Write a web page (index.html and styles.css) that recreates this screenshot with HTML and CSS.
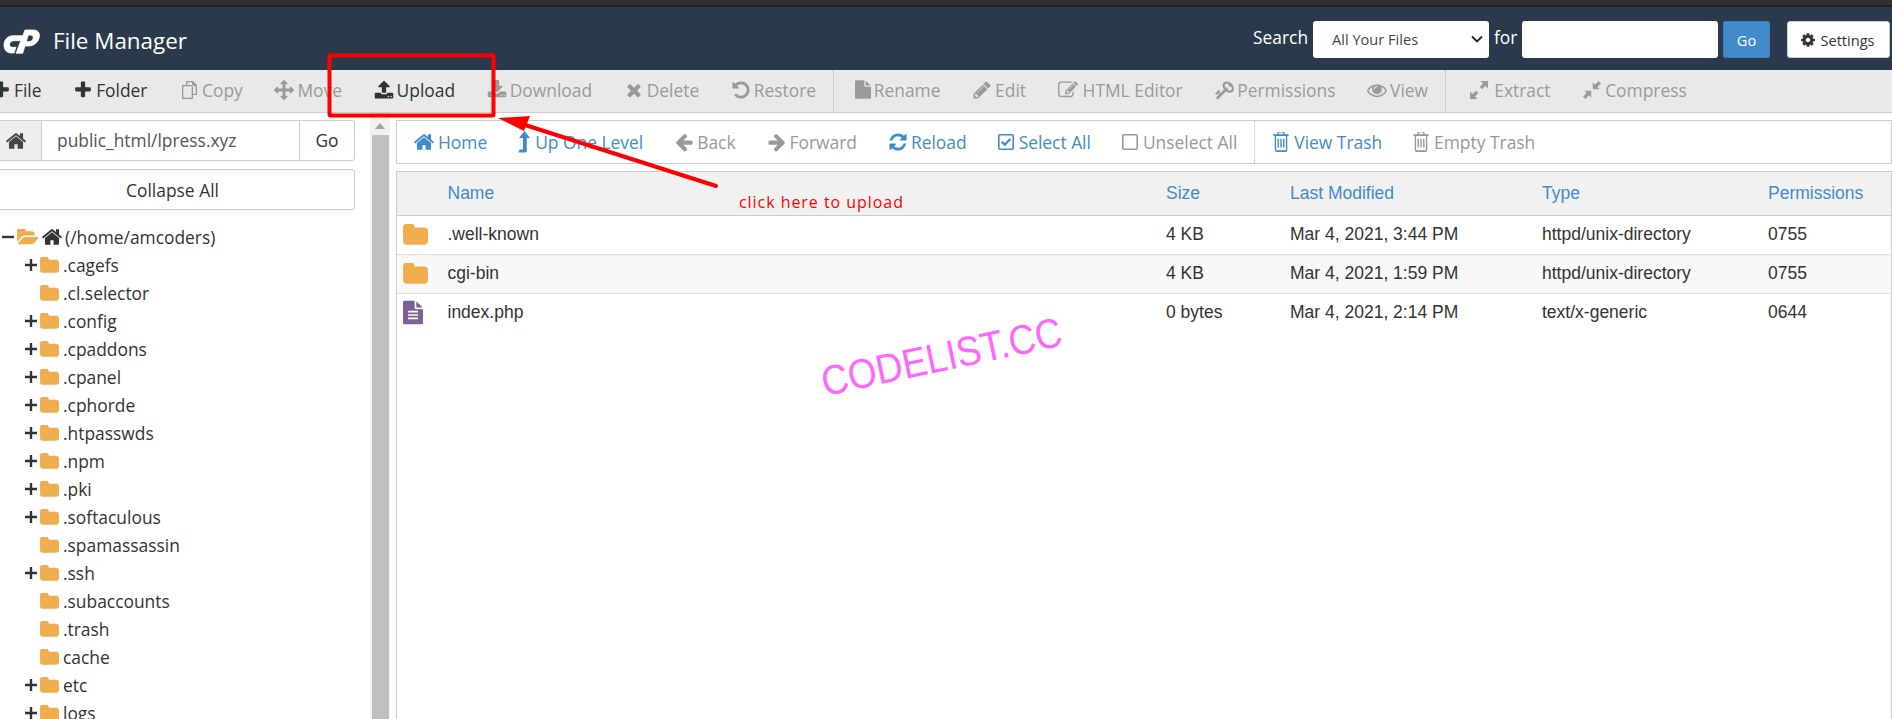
FILE: index.html
```html
<!DOCTYPE html>
<html lang="en">
<head>
<meta charset="utf-8">
<title>File Manager</title>
<link rel="stylesheet" href="styles.css">
</head>
<body>
<svg class="sprite" xmlns="http://www.w3.org/2000/svg">
<symbol id="i-home" viewBox="0 0 1792 1792"><path d="M1472 992v480q0 26-19 45t-45 19h-384v-384h-256v384h-384q-26 0-45-19t-19-45v-480q0-1 .5-3t.5-3l575-474 575 474q1 2 1 6zm223-69l-62 74q-8 9-21 11h-3q-13 0-21-7l-692-577-692 577q-12 8-24 7-13-2-21-11l-62-74q-8-10-7-23.500t11-21.500l719-599q32-26 76-26t76 26l244 204v-195q0-14 9-23t23-9h192q14 0 23 9t9 23v408l219 182q10 8 11 21.500t-7 23.500z"/></symbol>
<symbol id="i-plus" viewBox="0 0 1792 1792"><path d="M1600 736v192q0 40-28 68t-68 28h-416v416q0 40-28 68t-68 28h-192q-40 0-68-28t-28-68v-416h-416q-40 0-68-28t-28-68v-192q0-40 28-68t68-28h416v-416q0-40 28-68t68-28h192q40 0 68 28t28 68v416h416q40 0 68 28t28 68z"/></symbol>
<symbol id="i-tplus" viewBox="0 0 12 12"><path d="M4.800 0h2.400v4.800H12v2.400H7.200V12H4.800V7.200H0V4.800h4.800z"/></symbol>
<symbol id="i-tminus" viewBox="0 0 12 12"><path d="M0 4.800h12v2.400H0z"/></symbol>
<symbol id="i-folder" viewBox="0 0 1664 1408"><path d="M1664 456v704q0 92-66 158t-158 66H224q-92 0-158-66T0 1160V200q0-92 66-158t158-66h320q92 0 158 66t66 158v32h672q92 0 158 66t66 158z"/></symbol>
<symbol id="i-folder-open" viewBox="0 0 1920 1408"><path d="M1879 760q0 31-31 66l-336 396q-43 51-120.500 86.500t-143.500 35.500h-1088q-34 0-60.500-13t-26.500-43q0-31 31-66l336-396q43-51 120.500-86.500t143.500-35.500h1088q34 0 60.500 13t26.500 43zm-343-344v160h-832q-94 0-197 47.500t-164 119.500l-337 396-5 6q0-4-.5-12.500t-.500-12.500v-960q0-92 66-158t158-66h320q92 0 158 66t66 158v32h544q92 0 158 66t66 158z"/></symbol>
<symbol id="i-upload" viewBox="0 0 1792 1792"><path d="M1344 1472q0-26-19-45t-45-19-45 19-19 45 19 45 45 19 45-19 19-45zm256 0q0-26-19-45t-45-19-45 19-19 45 19 45 45 19 45-19 19-45zm128-224v320q0 40-28 68t-68 28h-1472q-40 0-68-28t-28-68v-320q0-40 28-68t68-28h427q21 56 70.500 92t110.500 36h256q61 0 110.500-36t70.500-92h427q40 0 68 28t28 68zm-325-648q-17 40-59 40h-256v448q0 26-19 45t-45 19h-256q-26 0-45-19t-19-45v-448h-256q-42 0-59-40-17-39 14-69l448-448q18-19 45-19t45 19l448 448q31 30 14 69z"/></symbol>
<symbol id="i-download" viewBox="0 0 1792 1792"><path d="M1344 1344q0-26-19-45t-45-19-45 19-19 45 19 45 45 19 45-19 19-45zm256 0q0-26-19-45t-45-19-45 19-19 45 19 45 45 19 45-19 19-45zm128-224v320q0 40-28 68t-68 28h-1472q-40 0-68-28t-28-68v-320q0-40 28-68t68-28h465l135 136q58 56 136 56t136-56l136-136h464q40 0 68 28t28 68zm-325-569q17 41-14 70l-448 448q-18 19-45 19t-45-19l-448-448q-31-29-14-70 17-39 59-39h256v-448q0-26 19-45t45-19h256q26 0 45 19t19 45v448h256q42 0 59 39z"/></symbol>
<symbol id="i-times" viewBox="0 0 1792 1792"><path d="M1490 1322q0 40-28 68l-136 136q-28 28-68 28t-68-28l-294-294-294 294q-28 28-68 28t-68-28l-136-136q-28-28-28-68t28-68l294-294-294-294q-28-28-28-68t28-68l136-136q28-28 68-28t68 28l294 294 294-294q28-28 68-28t68 28l136 136q28 28 28 68t-28 68l-294 294 294 294q28 28 28 68z"/></symbol>
<symbol id="i-left" viewBox="0 0 1792 1792"><path d="M1664 896v128q0 53-32.500 90.500t-84.500 37.500h-704l293 294q38 36 38 90t-38 90l-75 76q-37 37-90 37-52 0-91-37l-651-652q-37-37-37-90 0-52 37-91l651-650q38-38 91-38 52 0 90 38l75 74q38 38 38 91t-38 91l-293 293h704q52 0 84.500 37.500t32.500 90.500z"/></symbol>
<symbol id="i-right" viewBox="0 0 1792 1792"><path d="M1600 960q0 54-37 91l-651 651q-39 37-91 37-51 0-90-37l-75-75q-38-38-38-91t38-91l293-293h-704q-52 0-84.500-37.500t-32.500-90.500v-128q0-53 32.500-90.500t84.500-37.500h704l-293-294q-38-36-38-90t38-90l75-75q38-38 90-38 53 0 91 38l651 651q37 35 37 90z"/></symbol>
<symbol id="i-refresh" viewBox="0 0 1792 1792"><path d="M1639 1056q0 5-1 7-64 268-268 434.500t-478 166.500q-146 0-282.500-55t-243.500-157l-129 129q-19 19-45 19t-45-19-19-45v-448q0-26 19-45t45-19h448q26 0 45 19t19 45-19 45l-137 137q71 66 161 102t187 36q134 0 250-65t186-179q11-17 53-117 8-23 30-23h192q13 0 22.500 9.500t9.500 22.500zm25-800v448q0 26-19 45t-45 19h-448q-26 0-45-19t-19-45 19-45l138-138q-148-137-349-137-134 0-250 65t-186 179q-11 17-53 117-8 23-30 23h-199q-13 0-22.500-9.500t-9.500-22.500v-7q65-268 270-434.500t480-166.500q146 0 284 55.500t245 156.500l130-129q19-19 45-19t45 19 19 45z"/></symbol>
<symbol id="i-trash" viewBox="160 224 1472 1440" preserveAspectRatio="none"><path d="M704 736v576q0 14-9 23t-23 9h-64q-14 0-23-9t-9-23v-576q0-14 9-23t23-9h64q14 0 23 9t9 23zm256 0v576q0 14-9 23t-23 9h-64q-14 0-23-9t-9-23v-576q0-14 9-23t23-9h64q14 0 23 9t9 23zm256 0v576q0 14-9 23t-23 9h-64q-14 0-23-9t-9-23v-576q0-14 9-23t23-9h64q14 0 23 9t9 23zm128 724v-948h-896v948q0 22 7 40.500t14.500 27 10.500 8.500h832q3 0 10.500-8.500t14.500-27 7-40.500zm-672-1076h448l-48-117q-7-9-17-11h-317q-10 2-17 11zm928 32v64q0 14-9 23t-23 9h-96v948q0 83-47 143.500t-113 60.500h-832q-66 0-113-58.500t-47-141.500v-952h-96q-14 0-23-9t-9-23v-64q0-14 9-23t23-9h309l70-167q15-37 54-63t79-26h320q40 0 79 26t54 63l70 167h309q14 0 23 9t9 23z"/></symbol>
<symbol id="i-cog" viewBox="0 0 1792 1792"><path d="M1152 896q0-106-75-181t-181-75-181 75-75 181 75 181 181 75 181-75 75-181zm512-109v222q0 12-8 23t-20 13l-185 28q-19 54-39 91 35 50 107 138 10 12 10 25t-9 23q-27 37-99 108t-94 71q-12 0-26-9l-138-108q-44 23-91 38-16 136-29 186-7 28-36 28h-222q-14 0-24.500-8.500t-11.500-21.500l-28-184q-49-16-90-37l-141 107q-10 9-25 9-14 0-25-11-126-114-165-168-7-10-7-23 0-12 8-23 15-21 51-66.500t54-70.500q-27-50-41-99l-183-27q-13-2-21-12.500t-8-23.500v-222q0-12 8-23t19-13l186-28q14-46 39-92-40-57-107-138-10-12-10-24 0-10 9-23 26-36 98.500-107.500t94.500-71.500q13 0 26 10l138 107q44-23 91-38 16-136 29-186 7-28 36-28h222q14 0 24.500 8.500t11.500 21.500l28 184q49 16 90 37l142-107q9-9 24-9 13 0 25 10 129 119 165 170 7 8 7 22 0 12-8 23-15 21-51 66.500t-54 70.500q26 50 41 98l183 28q13 2 21 12.500t8 23.500z"/></symbol>
<symbol id="i-file" viewBox="128 0 1536 1792"><path d="M1152 512v-472q22 14 36 28l408 408q14 14 28 36h-472zm-128 32q0 40 28 68t68 28h544v1056q0 40-28 68t-68 28h-1344q-40 0-68-28t-28-68v-1600q0-40 28-68t68-28h800v544z"/></symbol>
<symbol id="i-filetext" viewBox="0 0 1536 1792"><path d="M1468 476q14 14 28 36h-472v-472q22 14 36 28zm-476 164h544v1056q0 40-28 68t-68 28h-1344q-40 0-68-28t-28-68v-1600q0-40 28-68t68-28h800v544q0 40 28 68t68 28zm160 736v-64q0-14-9-23t-23-9h-704q-14 0-23 9t-9 23v64q0 14 9 23t23 9h704q14 0 23-9t9-23zm0-256v-64q0-14-9-23t-23-9h-704q-14 0-23 9t-9 23v64q0 14 9 23t23 9h704q14 0 23-9t9-23zm0-256v-64q0-14-9-23t-23-9h-704q-14 0-23 9t-9 23v64q0 14 9 23t23 9h704q14 0 23-9t9-23z"/></symbol>
<symbol id="i-move" viewBox="0 0 1792 1792"><path d="M1792 896q0 26-19 45l-256 256q-19 19-45 19t-45-19-19-45v-128h-384v384h128q26 0 45 19t19 45-19 45l-256 256q-19 19-45 19t-45-19l-256-256q-19-19-19-45t19-45 45-19h128v-384h-384v128q0 26-19 45t-45 19-45-19l-256-256q-19-19-19-45t19-45l256-256q19-19 45-19t45 19 19 45v128h384v-384h-128q-26 0-45-19t-19-45 19-45l256-256q19-19 45-19t45 19l256 256q19 19 19 45t-19 45-45 19h-128v384h384v-128q0-26 19-45t45-19 45 19l256 256q19 19 19 45z"/></symbol>
<symbol id="i-undo" viewBox="0 0 1792 1792"><path d="M1664 896q0 156-61 298t-164 245-245 164-298 61q-172 0-327-72.500t-264-204.500q-7-10-6.500-22.500t8.500-20.500l137-138q10-9 25-9 16 2 23 12 73 95 179 147t225 52q104 0 198.500-40.500t163.500-109.500 109.500-163.500 40.500-198.500-40.500-198.500-109.500-163.500-163.500-109.500-198.500-40.500q-98 0-188 35.500t-160 101.500l137 138q31 30 14 69-17 40-59 40h-448q-26 0-45-19t-19-45v-448q0-42 40-59 39-17 69 14l130 129q107-101 244.500-156.500t284.500-55.500q156 0 298 61t245 164 164 245 61 298z"/></symbol>
<symbol id="i-pencil" viewBox="0 0 1792 1792"><path d="M491 1536l91-91-235-235-91 91v107h128v128h107zm523-928q0-22-22-22-10 0-17 7l-542 542q-7 7-7 17 0 22 22 22 10 0 17-7l542-542q7-7 7-17zm-54-192l416 416-832 832h-416v-416zm683 96q0 53-37 90l-166 166-416-416 166-165q36-38 90-38 53 0 91 38l235 234q37 39 37 91z"/></symbol>
<symbol id="i-edit" viewBox="0 0 1792 1792"><path d="M888 1184l116-116-152-152-116 116v56h96v96h56zm440-720q-16-16-33 1l-350 350q-17 17-1 33t33-1l350-350q17-17 1-33zm80 594v190q0 119-84.500 203.500t-203.500 84.500h-832q-119 0-203.500-84.500t-84.500-203.500v-832q0-119 84.500-203.500t203.500-84.500h832q63 0 117 25 15 7 18 23 3 17-9 29l-49 49q-14 14-32 8-23-6-45-6h-832q-66 0-113 47t-47 113v832q0 66 47 113t113 47h832q66 0 113-47t47-113v-126q0-13 9-22l64-64q15-15 35-7t20 29zm-96-738l288 288-672 672h-288v-288zm444 132l-92 92-288-288 92-92q28-28 68-28t68 28l152 152q28 28 28 68t-28 68z"/></symbol>
<symbol id="i-key" viewBox="0 0 1792 1792"><g transform="matrix(-1 0 0 1 1792 0)"><path d="M832 512q0-80-56-136t-136-56-136 56-56 136q0 42 19 83-41-19-83-19-80 0-136 56t-56 136 56 136 136 56 136-56 56-136q0-42-19-83 41 19 83 19 80 0 136-56t56-136zm851 704q0 17-49 66t-66 49q-9 0-28.500-16t-36.500-33-38.500-40-24.500-26l-96 96 220 220q28 28 28 68 0 42-39 81t-81 39q-40 0-68-28l-671-671q-176 131-365 131-163 0-265.500-102.500t-102.500-265.500q0-160 95-313t248-248 313-95q163 0 265.500 102.500t102.500 265.500q0 189-131 365l355 355 96-96q-3-3-26-24.500t-40-38.500-33-36.500-16-28.500q0-17 49-66t66-49q13 0 23 10 6 6 46 44.500t82 79.500 86.500 86 73 78 28.500 41z"/></g></symbol>
<symbol id="i-eye" viewBox="0 0 1792 1792"><path d="M1664 960q-152-236-381-353 61 104 61 225 0 185-131.500 316.500t-316.500 131.500-316.500-131.500-131.500-316.500q0-121 61-225-229 117-381 353 133 205 333.500 326.500t434.500 121.500 434.500-121.500 333.500-326.500zm-720-384q0-20-14-34t-34-14q-125 0-214.500 89.500t-89.500 214.500q0 20 14 34t34 14 34-14 14-34q0-86 61-147t147-61q20 0 34-14t14-34zm848 384q0 34-20 69-140 230-376.500 368.500t-499.500 138.500-499.500-139-376.500-368q-20-35-20-69t20-69q140-229 376.500-368t499.500-139 499.500 139 376.500 368q20 35 20 69z"/></symbol>
<symbol id="i-copy" viewBox="0 0 20 20"><path d="M7 1h7l4 4v10h-4v4H3V5h4zm1.300 1.300V5h5.700v8.700h2.700V6.300H13V2.300zM4.300 6.300v11.400h8.400V6.300z" fill-rule="evenodd"/></symbol>
<symbol id="i-expand" viewBox="0 0 20 20"><path d="M11.500 1H19v7.500l-2.600-2.600-3.400 3.400-2.300-2.300 3.400-3.400zM8.500 19H1v-7.500l2.600 2.600 3.400-3.400 2.300 2.300-3.400 3.400z"/></symbol>
<symbol id="i-compress" viewBox="0 0 20 20"><path d="M10.800 9.200V2.500l2.200 2.200L16.500 1 19 3.500l-3.700 3.500 2.200 2.200zM9.200 10.800v6.700L7 15.300 3.500 19 1 16.500l3.700-3.500-2.200-2.200z"/></symbol>
<symbol id="i-check" viewBox="2 2 16 16"><path d="M4 2h12a2 2 0 0 1 2 2v12a2 2 0 0 1-2 2H4a2 2 0 0 1-2-2V4a2 2 0 0 1 2-2zm0 1.600a.5.5 0 0 0-.4.400v12a.5.5 0 0 0 .4.400h12a.5.5 0 0 0 .4-.4V4a.5.500 0 0 0-.4-.4zM8.800 14.200 5 10.400l1.600-1.600 2.200 2.200 4.800-4.800 1.600 1.600z" fill-rule="evenodd"/></symbol>
<symbol id="i-square" viewBox="2 2 16 16"><path d="M4 2h12a2 2 0 0 1 2 2v12a2 2 0 0 1-2 2H4a2 2 0 0 1-2-2V4a2 2 0 0 1 2-2zm0 1.600a.5.5 0 0 0-.4.400v12a.5.5 0 0 0 .4.400h12a.5.5 0 0 0 .4-.4V4a.5.500 0 0 0-.4-.4z" fill-rule="evenodd"/></symbol>
<symbol id="i-levelup" viewBox="0 0 12 22"><path d="M6.500 0 12 7H8.800v13a1.500 1.500 0 0 1-1.500 1.500H.5l1-3H5V7H1z"/></symbol>
</svg>

<div class="strip"></div>

<header class="top">
  <svg class="logo" viewBox="0 0 37 25"><path d="M20.300 6.700H10.300C5 6.700 1 10.500 1 16 1 20 3 23.700 8 24H11L13 18.300H9C7 18 6 16.500 6.500 15 7 12.800 9 11.700 11 11.700H18.500Z"/><path d="M22 1H30.300C35 1 37 4 36.300 8 35.500 13 31 17 26 17H20L21.500 12.700H26C29 12.700 31 9 30 7.500 29.500 6.500 28.500 6 27 6H25.300L19.700 24.300H13Z"/></svg>
  <h1 class="title">File Manager</h1>
  <form class="search">
    <label class="search-label">Search</label>
    <div class="select"><span>All Your Files</span><svg class="chev" viewBox="0 0 12 8"><path d="M1 1.500 6 6.500 11 1.500" fill="none" stroke="#222" stroke-width="1.800"/></svg></div>
    <label class="search-label for">for</label>
    <div class="search-input"></div>
    <button class="go" type="button">Go</button>
    <button class="settings" type="button"><svg class="gear"><use href="#i-cog"/></svg>Settings</button>
  </form>
</header>

<nav class="toolbar">
  <a class="tool"><svg class="ic"><use href="#i-plus"/></svg>File</a>
  <a class="tool"><svg class="ic"><use href="#i-plus"/></svg>Folder</a>
  <a class="tool off"><svg class="ic"><use href="#i-copy"/></svg>Copy</a>
  <a class="tool off"><svg class="ic"><use href="#i-move"/></svg>Move</a>
  <a class="tool"><svg class="ic"><use href="#i-upload"/></svg>Upload</a>
  <a class="tool off"><svg class="ic"><use href="#i-download"/></svg>Download</a>
  <a class="tool off"><svg class="ic"><use href="#i-times"/></svg>Delete</a>
  <a class="tool off"><svg class="ic"><use href="#i-undo"/></svg>Restore</a>
  <span class="sep"></span>
  <a class="tool off"><svg class="ic ic-file"><use href="#i-file"/></svg>Rename</a>
  <a class="tool off"><svg class="ic"><use href="#i-pencil"/></svg>Edit</a>
  <a class="tool off"><svg class="ic ic-edit"><use href="#i-edit"/></svg>HTML Editor</a>
  <a class="tool off"><svg class="ic"><use href="#i-key"/></svg>Permissions</a>
  <a class="tool off"><svg class="ic"><use href="#i-eye"/></svg>View</a>
  <span class="sep sep-b"></span>
  <a class="tool off"><svg class="ic ic-wide"><use href="#i-expand"/></svg>Extract</a>
  <a class="tool off"><svg class="ic"><use href="#i-compress"/></svg>Compress</a>
</nav>

<div class="content">
  <aside class="side">
    <div class="path">
      <span class="path-home"><svg class="path-ic"><use href="#i-home"/></svg></span>
      <span class="path-val">public_html/lpress.xyz</span>
      <span class="path-go">Go</span>
    </div>
    <button class="collapse" type="button">Collapse All</button>
    <ul class="tree">
      <li class="node root"><svg class="tog"><use href="#i-tminus"/></svg><svg class="open"><use href="#i-folder-open"/></svg><svg class="roothome"><use href="#i-home"/></svg><span>(/home/amcoders)</span></li>
      <li class="node"><svg class="tog"><use href="#i-tplus"/></svg><svg class="fold"><use href="#i-folder"/></svg><span>.cagefs</span></li>
      <li class="node"><i class="tog"></i><svg class="fold"><use href="#i-folder"/></svg><span>.cl.selector</span></li>
      <li class="node"><svg class="tog"><use href="#i-tplus"/></svg><svg class="fold"><use href="#i-folder"/></svg><span>.config</span></li>
      <li class="node"><svg class="tog"><use href="#i-tplus"/></svg><svg class="fold"><use href="#i-folder"/></svg><span>.cpaddons</span></li>
      <li class="node"><svg class="tog"><use href="#i-tplus"/></svg><svg class="fold"><use href="#i-folder"/></svg><span>.cpanel</span></li>
      <li class="node"><svg class="tog"><use href="#i-tplus"/></svg><svg class="fold"><use href="#i-folder"/></svg><span>.cphorde</span></li>
      <li class="node"><svg class="tog"><use href="#i-tplus"/></svg><svg class="fold"><use href="#i-folder"/></svg><span>.htpasswds</span></li>
      <li class="node"><svg class="tog"><use href="#i-tplus"/></svg><svg class="fold"><use href="#i-folder"/></svg><span>.npm</span></li>
      <li class="node"><svg class="tog"><use href="#i-tplus"/></svg><svg class="fold"><use href="#i-folder"/></svg><span>.pki</span></li>
      <li class="node"><svg class="tog"><use href="#i-tplus"/></svg><svg class="fold"><use href="#i-folder"/></svg><span>.softaculous</span></li>
      <li class="node"><i class="tog"></i><svg class="fold"><use href="#i-folder"/></svg><span>.spamassassin</span></li>
      <li class="node"><svg class="tog"><use href="#i-tplus"/></svg><svg class="fold"><use href="#i-folder"/></svg><span>.ssh</span></li>
      <li class="node"><i class="tog"></i><svg class="fold"><use href="#i-folder"/></svg><span>.subaccounts</span></li>
      <li class="node"><i class="tog"></i><svg class="fold"><use href="#i-folder"/></svg><span>.trash</span></li>
      <li class="node"><i class="tog"></i><svg class="fold"><use href="#i-folder"/></svg><span>cache</span></li>
      <li class="node"><svg class="tog"><use href="#i-tplus"/></svg><svg class="fold"><use href="#i-folder"/></svg><span>etc</span></li>
      <li class="node"><svg class="tog"><use href="#i-tplus"/></svg><svg class="fold"><use href="#i-folder"/></svg><span>logs</span></li>
    </ul>
  </aside>

  <div class="scroll"><div class="scroll-up"></div><div class="scroll-thumb"></div></div>

  <main class="main">
    <nav class="actions">
      <a class="act"><svg class="ic ic-home"><use href="#i-home"/></svg>Home</a>
      <a class="act"><svg class="ic lvl"><use href="#i-levelup"/></svg>Up One Level</a>
      <a class="act off"><svg class="ic"><use href="#i-left"/></svg>Back</a>
      <a class="act off"><svg class="ic"><use href="#i-right"/></svg>Forward</a>
      <a class="act"><svg class="ic"><use href="#i-refresh"/></svg>Reload</a>
      <a class="act"><svg class="ic ic-box"><use href="#i-check"/></svg>Select All</a>
      <a class="act off"><svg class="ic ic-box"><use href="#i-square"/></svg>Unselect All</a>
      <span class="sep tall"></span>
      <a class="act"><svg class="ic ic-trash"><use href="#i-trash"/></svg>View Trash</a>
      <a class="act off"><svg class="ic ic-trash"><use href="#i-trash"/></svg>Empty Trash</a>
    </nav>

    <section class="listing">
      <table class="files">
        <colgroup><col class="c-ic"><col class="c-name"><col class="c-size"><col class="c-date"><col class="c-type"><col class="c-perm"></colgroup>
        <thead><tr><th></th><th>Name</th><th>Size</th><th>Last Modified</th><th>Type</th><th>Permissions</th></tr></thead>
        <tbody>
          <tr><td class="cell-ic"><svg class="row-fold"><use href="#i-folder"/></svg></td><td>.well-known</td><td>4 KB</td><td>Mar 4, 2021, 3:44 PM</td><td>httpd/unix-directory</td><td>0755</td></tr>
          <tr class="alt"><td class="cell-ic"><svg class="row-fold"><use href="#i-folder"/></svg></td><td>cgi-bin</td><td>4 KB</td><td>Mar 4, 2021, 1:59 PM</td><td>httpd/unix-directory</td><td>0755</td></tr>
          <tr><td class="cell-ic"><svg class="row-file"><use href="#i-filetext"/></svg></td><td>index.php</td><td>0 bytes</td><td>Mar 4, 2021, 2:14 PM</td><td>text/x-generic</td><td>0644</td></tr>
        </tbody>
      </table>
    </section>
  </main>
</div>

<svg class="markup" viewBox="0 0 1892 719">
  <rect x="329.500" y="55.500" width="164" height="60" fill="none" stroke="#f00" stroke-width="4" rx="1"/>
  <path d="M716 186 522 124" fill="none" stroke="#f00" stroke-width="4" stroke-linecap="round"/>
  <path d="M498 118 530 116 524 131z" fill="#f00"/>
</svg>
<div class="note">click here to upload</div>
<div class="stamp">CODELIST.CC</div>
</body>
</html>
```
FILE: styles.css
```css
* { box-sizing: border-box; }
html, body { margin: 0; padding: 0; }
body {
  width: 1892px;
  height: 719px;
  overflow: hidden;
  position: relative;
  display: flex;
  flex-direction: column;
  background: #fff;
  color: #333;
  font-family: "Open Sans", sans-serif;
  font-size: 17.4px;
}
.sprite { position: absolute; width: 0; height: 0; overflow: hidden; }
svg { fill: currentColor; flex: none; display: block; }
.strip { height: 7px; flex: none; background: #2f2f2f; border-bottom: 2px solid #222; }

/* header */
.top {
  flex: none;
  height: 63px;
  background: #2a3a4c;
  display: flex;
  align-items: flex-start;
  color: #fff;
}
.logo { width: 37px; height: 25px; margin: 22px 0 0 3px; stroke: #fff; stroke-width: .8; }
.title { margin: 16px 0 0 13px; font-size: 22.4px; font-weight: 400; line-height: 36px; }
.search { margin-left: auto; display: flex; align-items: flex-start; padding-top: 14px; padding-right: 2px; }
.search-label { line-height: 32px; width: 60px; }
.search-label.for { width: 28px; margin-left: 5px; }
.select {
  width: 176px; height: 37px; background: #fff; border-radius: 3px; color: #444;
  font-size: 14.6px; display: flex; align-items: center; justify-content: space-between;
  padding: 0 6px 2px 19px;
}
.chev { width: 12px; height: 8px; }
.search-input { width: 196px; height: 37px; background: #fff; border-radius: 3px; }
.go {
  width: 47px; height: 37px; margin-left: 5px; background: #428bca; color: #fff; border: 1px solid #3a7fbb;
  border-radius: 2px; font: 14.6px "Open Sans", sans-serif; padding-top: 2px;
}
.settings {
  width: 103px; height: 37px; margin-left: 17px; background: #fff; color: #333; border: 1px solid #ccc;
  border-radius: 3px; font: 14.6px "Open Sans", sans-serif; display: flex; align-items: center;
  justify-content: center; gap: 4px; padding: 0 2px 0 0;
}
.gear { width: 16px; height: 16px; }

/* main toolbar */
.toolbar {
  flex: none;
  height: 43px;
  background: #e9e9e9;
  border-bottom: 1px solid #ccc;
  display: flex;
  align-items: center;
  margin-left: -9px;
  gap: 31.6px;
  padding-bottom: 3px;
  white-space: nowrap;
}
.tool, .act { display: flex; align-items: center; gap: 3px; color: #333; }
.tool.off { color: #9a9a9a; }
.ic { width: 20px; height: 20px; }
.tool .ic-file { width: 16px; height: 19px; }
.tool .ic-edit { margin-right: 2px; }
.tool .ic-wide { margin-right: 2.5px; }
.sep { width: 0; align-self: stretch; border-left: 1px dotted #bbb; margin: -0px -11px -3px -14.5px; }
.sep-b { margin-right: -9px; }

/* content */
.content { flex: 1; min-height: 0; display: flex; padding-top: 7px; }
.side { width: 365px; margin-left: -10px; flex: none; }
.path {
  height: 41px; display: flex; border: 1px solid #ccc; border-radius: 3px; align-items: stretch; line-height: 38px;
}
.path-home { width: 51px; background: #eee; border-right: 1px solid #ccc; display: flex; align-items: center; justify-content: center; }
.path-ic { width: 22px; height: 22px; color: #444; }
.path-val { flex: 1; padding-left: 15px; color: #555; }
.path-go { width: 55px; border-left: 1px solid #ccc; text-align: center; }
.collapse {
  display: block; width: 100%; height: 41px; margin-top: 8px; background: #fff; border: 1px solid #ccc;
  border-radius: 3px; font: 17.4px "Open Sans", sans-serif; color: #333; padding: 0;
}
.tree { list-style: none; margin: 13px 0 0; padding: 0 0 0 12px; }
.node { height: 28px; display: flex; align-items: center; padding-left: 23px; }
.tog { width: 12px; height: 12px; margin-right: 3px; color: #333; display: block; flex: none; }
.fold { width: 19px; height: 16px; margin-right: 4px; color: #f0ad4e; }
.root { padding-left: 0; }
.open { width: 22px; height: 16px; margin-right: 2px; color: #f0ad4e; }
.roothome { width: 22px; height: 22px; margin-right: 2px; color: #333; }

/* scrollbar of the tree */
.scroll { width: 20px; flex: none; margin: -7px 0 0 15px; background: #f1f1f1; display: flex; flex-direction: column; align-items: center; padding-top: 10px; }
.scroll-up { width: 0; height: 0; border: 5px solid transparent; border-top: 0; border-bottom: 6px solid #a3a3a3; margin-bottom: 6px; }
.scroll-thumb { flex: 1; width: 17px; background: #c1c1c1; }

/* main pane */
.main { flex: 1; min-width: 0; margin-left: 6px; display: flex; flex-direction: column; }
.actions {
  height: 44px; flex: none; display: flex; align-items: center; gap: 31px; border: 1px solid #ccc;
  padding-left: 16px; color: #428bca; white-space: nowrap;
}
.act { color: #428bca; gap: 3px; }
.act.off { color: #999; }
.act .ic-home { width: 22px; height: 22px; }
.act .lvl { width: 12px; height: 22px; margin-right: 2px; }
.act .ic-box { width: 16px; height: 16px; margin-right: 2px; }
.act .ic-trash { width: 16px; height: 20px; margin-right: 2px; }
.sep.tall { margin: 0 -13px 0 -14px; }
.listing { flex: 1; margin-top: 7px; border: 1px solid #ccc; border-bottom: 0; }
.files { width: 100%; border-collapse: collapse; table-layout: fixed; font-family: "Liberation Sans", Arial, sans-serif; font-size: 17.5px; }
.c-ic { width: 50.5px; }
.c-name { width: 718.5px; }
.c-size { width: 124px; }
.c-date { width: 252px; }
.c-type { width: 226px; }
.files th { height: 43px; background: #f1f1f1; color: #428bca; font-weight: 400; text-align: left; padding: 1px 0 0; border-bottom: 1px solid #ccc; }
.files td { height: 39px; padding: 0; color: #333; border-bottom: 1px solid #ddd; }
.files tr:last-child td { border-bottom: 0; }
.alt td { background: #f8f8f8; }
.cell-ic { padding-left: 6px !important; }
.row-fold { width: 25px; height: 21px; color: #f0ad4e; }
.row-file { width: 20px; height: 25px; color: #7c6199; }

/* annotations over the screenshot */
.markup { position: absolute; left: 0; top: 0; width: 1892px; height: 719px; pointer-events: none; fill: none; }
.note { position: absolute; left: 739px; top: 191px; color: #f00; font-size: 16px; letter-spacing: .95px; line-height: 22px; white-space: nowrap; }
.stamp {
  position: absolute; left: 822px; top: 362px; color: #ff66ff; font-family: "Liberation Sans", Arial, sans-serif;
  font-size: 37px; line-height: 42px; white-space: nowrap; transform: rotate(-12deg) scaleY(1.12); transform-origin: left center;
}
```
